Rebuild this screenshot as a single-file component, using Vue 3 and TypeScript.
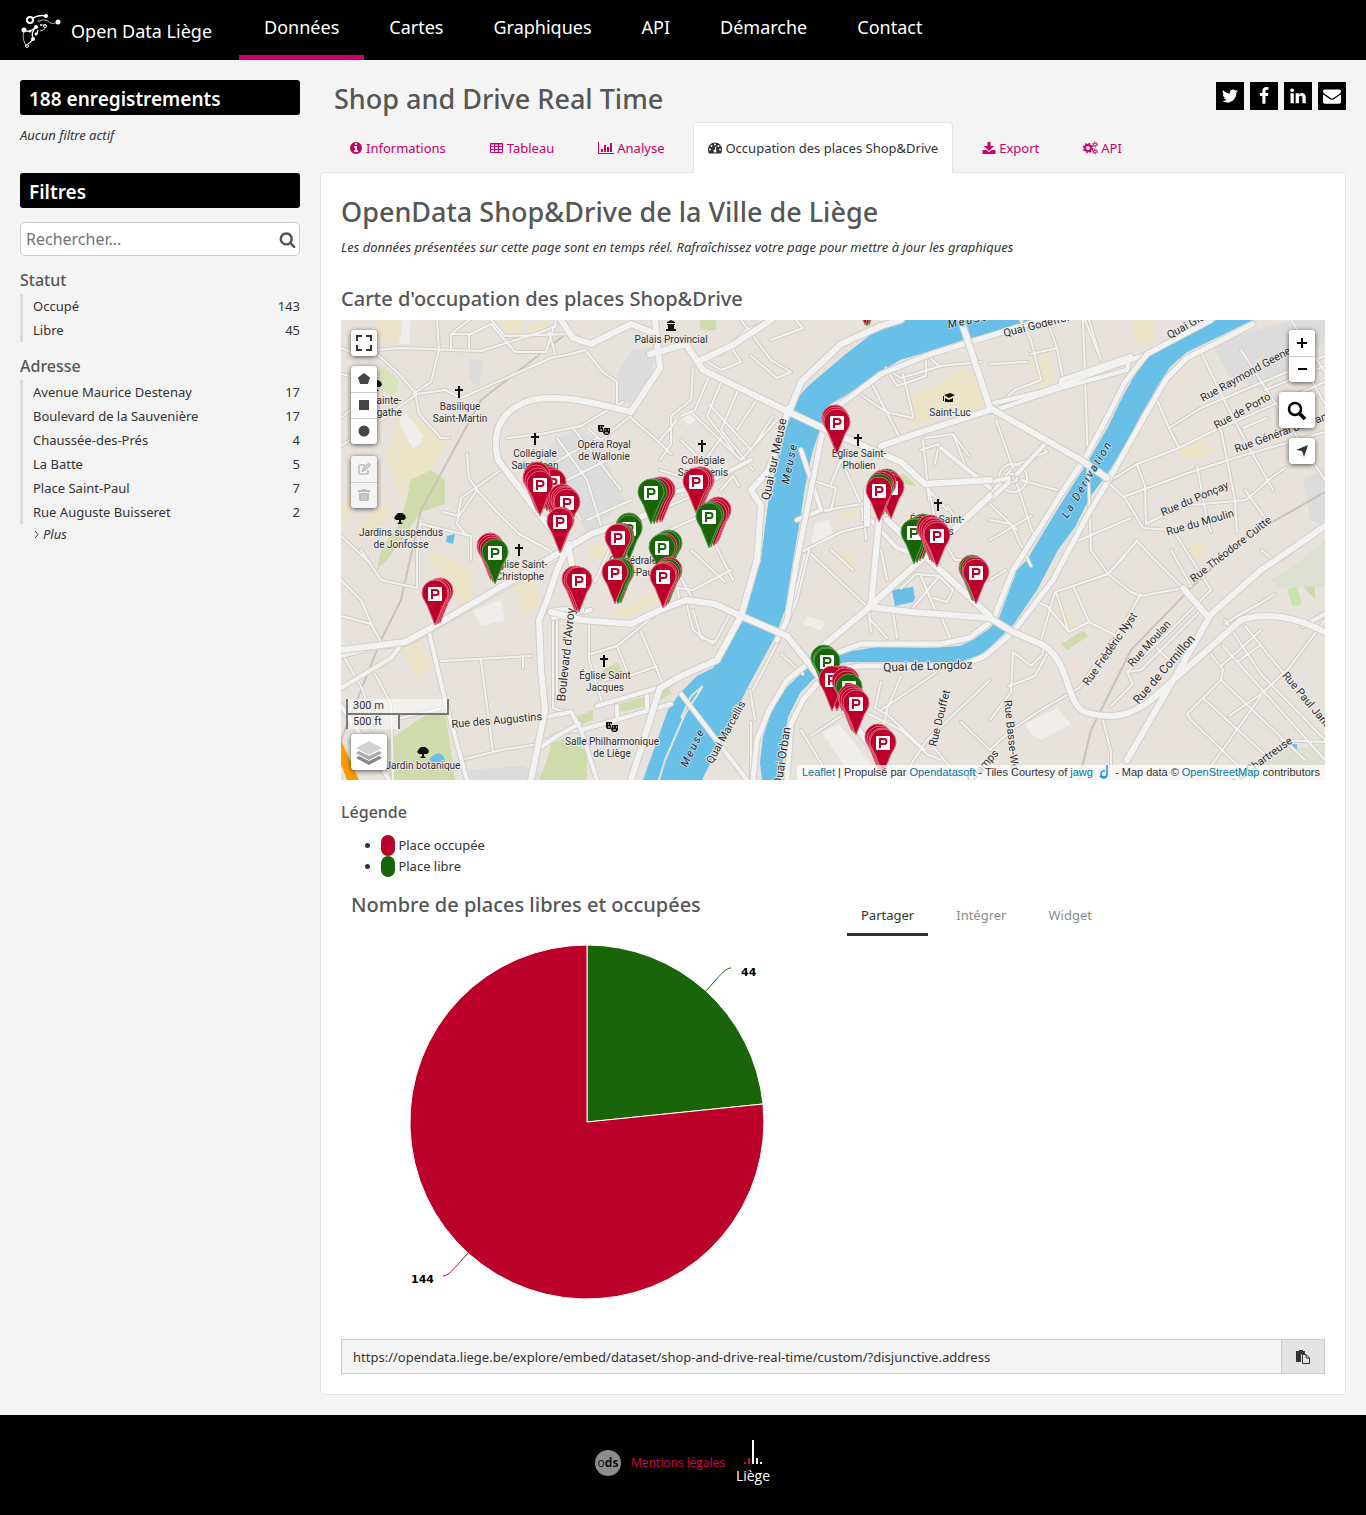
<script setup lang="ts">
import { ref } from 'vue'

interface Label { t: string[]; x: number; y: number; s?: number; r?: number }
interface Poi { kind: 'cross' | 'tree' | 'mask' | 'hall' | 'school'; x: number; y: number }
interface Stack { x: number; y: number; green?: boolean; ghosts: [number, number, number][] }

const nav = ['Données', 'Cartes', 'Graphiques', 'API', 'Démarche', 'Contact']
const tabs = [
  { id: 'info', label: 'Informations' },
  { id: 'table', label: 'Tableau' },
  { id: 'chart', label: 'Analyse' },
  { id: 'gauge', label: 'Occupation des places Shop&Drive' },
  { id: 'export', label: 'Export' },
  { id: 'api', label: 'API' },
]
const facets = [
  { name: 'Statut', items: [['Occupé', 143], ['Libre', 45]] },
  {
    name: 'Adresse',
    items: [
      ['Avenue Maurice Destenay', 17],
      ['Boulevard de la Sauvenière', 17],
      ['Chaussée-des-Prés', 4],
      ['La Batte', 5],
      ['Place Saint-Paul', 7],
      ['Rue Auguste Buisseret', 2],
    ],
  },
]
const shareTabs = ['Partager', 'Intégrer', 'Widget']
const query = ref('')
const embedUrl = ref('https://opendata.liege.be/explore/embed/dataset/shop-and-drive-real-time/custom/?disjunctive.address')

const social = [
  { name: 'Twitter', d: 'M1684 408q-67 98-162 167 1 14 1 42 0 130-38 259.5t-115.5 248.5-184.5 210.5-258 146-323 54.5q-271 0-496-145 35 4 78 4 225 0 401-138-105-2-188-64.5t-114-159.5q33 5 61 5 43 0 85-11-112-23-185.5-111.5t-73.5-205.5v-4q68 38 146 41-66-44-105-115t-39-154q0-88 44-163 121 149 294.5 238.5t371.5 99.5q-8-38-8-74 0-134 94.5-228.5t228.5-94.5q140 0 236 102 109-21 205-78-37 115-142 178 93-10 186-50z' },
  { name: 'Facebook', d: 'M1343 12v264h-157q-86 0-116 36t-30 108v189h293l-39 296h-254v759h-306v-759h-255v-296h255v-218q0-186 104-288.5t277-102.5q147 0 228 12z' },
  { name: 'LinkedIn', d: 'M477 625v991h-330v-991h330zm21-306q1 73-50.5 122t-135.5 49h-2q-82 0-132-49t-50-122q0-74 51.5-122.5t134.5-48.5 133 48.5 51 122.5zm1166 729v568h-329v-530q0-105-40.5-164.5t-126.5-59.5q-63 0-105.5 34.5t-63.5 85.5q-11 30-11 81v553h-329q2-399 2-647t-1-296l-1-48h329v144h-2q20-32 41-56t56.5-52 87-43.5 114.5-15.5q171 0 275 113.5t104 332.5z' },
  { name: 'E-mail', d: 'M1792 710v794q0 66-47 113t-113 47h-1472q-66 0-113-47t-47-113v-794q44 49 101 87 362 246 497 345 57 42 92.5 65.5t94.5 48 110 24.5h2q51 0 110-24.5t94.5-48 92.5-65.5q170-123 498-345 57-39 100-87zm0-294q0 79-49 151t-122 123q-376 261-468 325-10 7-42.5 31t-54 38.5-52 32.5-57.5 27-50 9h-2q-23 0-50-9t-57.5-27-52-32.5-54-38.5-42.5-31q-91-64-262-182.5t-205-142.5q-62-42-117-115.5t-55-136.5q0-78 41.5-130t118.5-52h1472q65 0 112.5 47t47.5 113z' },
]
const infoPath = 'M1152 1376v-160q0-14-9-23t-23-9h-96v-512q0-14-9-23t-23-9h-320q-14 0-23 9t-9 23v160q0 14 9 23t23 9h96v320h-96q-14 0-23 9t-9 23v160q0 14 9 23t23 9h448q14 0 23-9t9-23zm-128-896v-160q0-14-9-23t-23-9h-192q-14 0-23 9t-9 23v160q0 14 9 23t23 9h192q14 0 23-9t9-23zm640 416q0 209-103 385.5t-279.5 279.5-385.5 103-385.5-103-279.5-279.5-103-385.5 103-385.5 279.5-279.5 385.5-103 385.5 103 279.5 279.5 103 385.5z'
const searchPath = 'M1216 832q0-185-131.5-316.5t-316.5-131.5-316.5 131.5-131.5 316.5 131.5 316.5 316.5 131.5 316.5-131.5 131.5-316.5zm512 832q0 52-38 90t-90 38q-54 0-90-38l-343-342q-179 124-399 124-143 0-273.5-55.5t-225-150-150-225-55.5-273.5 55.5-273.5 150-225 225-150 273.5-55.5 273.5 55.5 225 150 150 225 55.5 273.5q0 220-124 399l343 343q37 37 37 90z'

const areas: { f: string; d: string }[] = [
  { f: '#ece4c8', d: 'M36 0H60L56 26L34 20ZM155 0H182L178 22L160 14ZM188 4L206 0L205 18L190 20ZM58 92L112 118L92 146L60 176L44 140L54 112ZM14 212L36 186L52 184L50 196L28 214L14 226ZM88 230L132 250L130 276L122 286L110 272L96 250L86 240ZM166 240L196 262L200 290L184 294L178 284ZM60 330L78 320L92 346L76 358ZM245 226L262 222L266 236L250 240ZM270 292L318 270L320 282L284 298ZM572 72L596 66L620 48L645 60L646 86L600 96L572 106L564 100L570 88ZM498 192L520 186L522 196L500 200ZM492 236L512 232L514 252L500 248ZM790 0H814L812 22L796 24ZM688 38L706 32L714 60L698 70ZM836 130L856 120L874 128L864 138L842 140ZM840 230L862 220L866 232L850 240ZM714 290L724 287L736 306L730 312ZM0 186L12 170L10 196L0 200ZM500 232L516 238L514 250L492 240Z' },
  { f: '#d9e3ba', d: 'M24 46L44 48L58 60L54 76L38 68L20 58Z' },
  { f: '#d0dbab', d: 'M359 0H375V10H359ZM70 160L90 150L104 160V184L80 192L46 240L36 250L40 230L56 208L64 186ZM48 420L92 390L104 392L114 460H48ZM210 424L228 416L246 432V460H198L206 440ZM236 396L252 390L252 400L238 406ZM278 384L306 376L306 386L280 392ZM314 370L328 366L330 374L318 380ZM262 350L276 342L282 352L258 362ZM720 324L742 311L747 316L726 330ZM555 158L562 153L576 166L560 164ZM974 230V280L962 266L958 252Z' },
  { f: '#dce0d0', d: 'M930 260L960 240L984 220V266L940 268ZM920 444L946 430L984 424V450L960 460H910Z' },
  { f: '#dcdcdc', d: 'M292 30L316 26L308 62L300 84L278 82L276 54ZM128 38L142 42L138 66L128 60ZM216 118L240 108L262 128L272 156L284 180L246 216L236 190L196 144ZM870 22L952 0H984V22L960 36L920 70L888 56ZM962 160L984 148V206L970 200ZM128 450L180 446L200 452L196 460H130Z' },
  { f: '#efeeec', d: 'M58 96L66 94L82 116L78 126L72 128L60 108ZM62 0H70L68 24H58ZM132 290L160 280L164 300L140 306ZM481 412L498 404L540 456L530 462L506 450ZM466 296L484 302L480 310L462 304ZM340 92L348 90L356 100L346 106ZM474 204L488 200L492 214L480 226L470 222ZM684 404L716 388L730 404L700 420L690 414Z' },
  { f: '#f2dfdb', d: 'M725 344L736 337L744 350L732 354Z' },
  { f: '#cbe2a9', d: 'M946 269L956 267L961 284L952 287Z' },
  { f: '#ff9800', d: 'M0 420L18 460H6L0 444Z' },
  { f: '#68bfe8', d: 'M106 216L114 214L112 224L105 222ZM551 270L572 267L574 278L572 282L554 286ZM88 440C94 430 104 432 104 442L98 446ZM950 424H956V429H950Z' },
]
const water = [
  'M649 0H559L532 13L506 33L486 50L466 67L457 78L450 92L442 113L436 143L428 177L424 207L420 240L416 250L403 293L399 302L386 330L372 348L356 356L339 373L327 390L302 460H361L379 423L409 363L434 317L444 290L452 240L459 200L464 167L471 133L477 115L482 103L497 85L519 67L539 52L559 40L586 32L619 21L649 13L692 0Z',
  'M876 0L862 5L836 17L819 27L806 38L792 58L781 78L767 107L746 143L721 182L702 213L686 240L676 250L658 298L649 308L632 320L619 326L586 328L536 327L499 333L480 340L466 348L446 367L432 387L422 417L419 443L421 460H442V423L447 397L459 373L476 355L490 346L506 342H552L619 342L639 335L649 327L672 305L696 270L717 230L734 207L749 177L764 157L782 130L799 97L816 67L829 47L846 32L912 0Z',
]
const minor = [
  'M0 28L18 36L34 30L60 28L140 31L200 12L215 6', 'M96 0L98 30L90 62L72 74', 'M34 32L58 54L74 72L78 94L100 118H108', 'M0 126L40 100L76 74L104 70L120 78L210 38L230 34L244 30L262 52L276 62V84',
  'M128 0L110 14H130L150 4L162 18L174 32H205L215 0', 'M110 14V28M128 14V28', 'M150 0L164 16L230 14M208 12L214 34', 'M0 54L24 60L16 84L0 98', 'M126 134L128 158L136 170L154 190L178 214L208 230L214 236', 'M160 150L120 178L116 204L126 216', 'M80 204L130 216V240', 'M136 170L118 196L102 192', 'M166 118L200 114L240 106L260 94L282 82', 'M216 118L246 160L262 212M200 136L240 200M232 108L280 170M226 160L270 138M246 200L290 180M210 145L256 118',
  'M246 108L260 120L292 94M290 98L320 124L330 134', 'M20 230L40 260L76 268M30 244L0 216M76 268V230L80 200', 'M0 296L30 304L40 322M0 260L20 280L34 312M0 332L22 370L32 410', 'M100 341L190 336', 'M34 354L50 384L52 460M52 400L102 388', 'M140 340L152 432M182 336V348', 'M120 440L160 430L198 424L216 414L240 410', 'M212 300V388L224 392M216 300V380', 'M248 302V340L262 386M250 334L276 326L320 290M276 326L288 356M288 356L262 360M300 312L322 364M288 356L316 346',
  'M360 38L380 34L405 10L430 0M360 38L380 50L400 42L392 30M400 0L430 40L450 52M430 20L462 8L455 0M410 36L436 58L450 52', 'M352 48L350 80L330 96V124L319 140M370 52L354 90L340 96M382 58L366 96L392 130M398 68L380 110L404 140M418 76L396 110M350 92L400 140L436 100M368 84L410 130L432 96M340 120L380 160M319 150L350 160L380 118',
  'M404 140L412 150M380 170L392 156L398 166', 'M490 86L530 62L560 120M530 62L545 92L572 98M519 74L545 92M562 54L572 96M545 48L556 66L585 56V34L598 46L640 42', 'M547 50L560 58L600 46', 'M470 160L495 168L490 190L462 194M500 140L520 184L522 198M500 140L490 164M462 194L520 184L536 176M460 232L500 212L524 206L525 220M520 200H532', 'M582 120L588 180M584 118L612 114L628 136M612 114L626 150L648 160M580 130L598 124L594 144', 'M586 168L606 190M588 168L596 210L614 240L640 240M606 186L616 200', 'M470 234L530 290M490 230L512 250M560 268L575 254L598 256L612 270L606 282L592 278M580 256L594 290M600 254L570 290M528 298L546 318M552 292L556 318M600 296L610 320M528 292L530 312', 'M440 334L462 354M450 320L482 352', 'M520 390L560 410L586 434L600 440M540 362L534 388L548 396L584 430M560 356L545 392M540 390L596 352M470 416L500 396M460 410L490 460M546 392L536 424',
  'M649 92L674 70L700 60L690 20L680 0M690 34L716 28L706 0M716 28L722 58M649 44L686 42M744 0L760 40L748 0M649 174L670 150M655 100L672 148M680 160L716 170M660 166L652 170M676 164L692 214M649 184L676 210M700 126L706 132L672 146', 'M816 80L828 108L838 128M828 108L860 88L984 36M838 128L796 144L764 164M838 128L870 112L984 62', 'M860 32L884 82L906 124L932 170M880 110L894 180L896 212M796 144L804 166L805 204M762 158L784 178L802 208M782 177L850 152L900 136L984 112M856 146L866 200L870 212M802 208L832 210L870 270M805 204L840 186L905 180L930 158L944 148M950 0L984 52M900 30L984 160M902 108L926 98M734 222L790 198M795 220L810 236L842 268M904 170L924 198', 'M649 400L670 372L672 332L690 346L702 334L700 320L714 272L767 254L795 222M668 366L694 356L708 330M742 0L750 230L767 254L790 272L800 276L842 268M800 274L784 302L738 368L700 390L670 410L649 430M715 272L728 312L748 302L732 266M748 302L776 316M696 282L706 286L728 312M767 254L784 236', 'M649 260L665 250M830 230L850 266M870 270L820 320L786 352L792 364L770 386M850 278L860 290M860 290L800 350L786 352M816 328L830 342M920 230L930 238M884 300L920 354L984 420M884 304L896 296L918 284L934 274M904 306L940 350L960 376M870 334L882 350L880 360L862 378L846 394L850 400L912 460M882 326L984 440M880 360L964 440M880 346L920 310M896 342L918 326M920 376L860 460M984 300L948 348L920 374L888 396M862 378L930 440M762 400L770 432V460M940 420L984 422M649 220L690 196M649 200L670 204L690 246',
  'M960 42L984 84M924 70L984 46M940 240L984 206', 'M319 190L356 174M319 120L336 100', 'M254 262L268 230M319 214L360 196L392 260M330 240L350 276M340 286L336 268L352 270L390 250M350 230L384 262M352 290L360 318L374 322L388 296M346 286L352 310L372 324', 'M410 402V460M409 370L414 400M468 230L456 280L440 316L412 370M464 234L448 300', 'M540 230L546 260M560 460L586 420L649 360M590 424L620 460M620 402L649 430',
  'M658 158a14 14 0 1 0 28 0a14 14 0 1 0 -28 0', 'M668 158a4 4 0 1 0 8 0a4 4 0 1 0 -8 0',
]
const rail = ['M0 420L40 320L60 280L80 190L140 80L230 10', 'M738 460L750 410L790 330L850 268L900 220L984 172']
const mid = [
  'M0 336L30 328L64 324L90 310L230 230', 'M0 368L50 338L58 328', 'M88 312L104 380L126 460', 'M212 298L250 290M212 290L240 288', 'M200 398L230 392L240 410L256 460M240 410L330 384', 'M196 430L216 416L238 404', 'M256 386L330 364M276 386V396M306 376V390', 'M0 386L30 430L48 460', 'M319 174L356 168L410 140',
  'M460 130L480 190L456 200', 'M536 172L560 166M522 184L534 176', 'M530 200L556 228L582 236', 'M649 84L700 72L784 42L806 34M649 92L720 68L786 50L788 40M720 66V60L790 36', 'M600 128L649 168M649 180L668 162M676 154L704 124M649 162L668 158', 'M842 268L868 296', 'M962 306L984 294', 'M406 460L340 374',
]
const major = [
  'M0 330L64 322L90 308L250 214L290 200L319 190', 'M157 140C150 110 160 90 190 80C220 74 250 82 290 92L319 48L314 0', 'M157 140L200 196L228 230L240 290', 'M228 224L216 250L206 280L198 300L200 350L204 390L190 460', 'M210 292L240 300L290 304L319 290L345 280L374 284L400 296', 'M220 0L232 18L250 24L290 4L310 12', 'M309 34L345 24L362 50L448 92', 'M360 40L390 26L430 0', 'M448 92L490 112L560 142L584 164L649 160', 'M448 92L460 62L500 24L540 6L560 0', 'M448 88L428 150L410 170L420 186L416 240L400 296L376 340L340 356L319 368L290 460', 'M540 126L580 112L649 90', 'M400 296L446 316L470 346L540 440L556 460', 'M526 170V204', 'M620 0L649 88L740 140L766 158', 'M538 200L530 286L482 326', 'M528 287L580 240L649 176', 'M546 200L584 236L649 296', 'M528 287L570 292L649 298L672 312', 'M672 312L700 324C730 340 724 384 744 392C770 400 790 396 810 380L900 300C930 290 960 300 984 312', 'M868 296L920 250L984 206', 'M786 440L868 298', 'M842 268L868 298',
]
const quays = [
  'M482 110L474 150L464 200L456 240L446 300L436 320', 'M482 338L520 324L600 324L628 318L652 300L672 250L700 206L720 174L744 138L768 94L784 62L806 34L870 0', 'M912 4L846 38L826 58L806 92L770 156L746 196L712 260L672 312L644 336L620 346H520L490 350', 'M482 332L446 360L428 390L416 420L412 460', 'M486 352L462 380L450 404L446 460', 'M500 84L540 54L590 34L649 16L700 0',
]

const labels: Label[] = [
  { t: ['Palais Provincial'], x: 330, y: 23 }, { t: ['Basilique', 'Saint-Martin'], x: 119, y: 90 }, { t: ['Opéra Royal', 'de Wallonie'], x: 263, y: 128 },
  { t: ['Collégiale', 'Saint-Jean'], x: 194, y: 137 }, { t: ['Jardins suspendus', 'de Jonfosse'], x: 60, y: 216 }, { t: ['Sainte-', 'Agathe'], x: 45, y: 84 },
  { t: ['Église Saint-', 'Christophe'], x: 179, y: 248 }, { t: ['Cathédrale', 'Saint-Paul'], x: 292, y: 244 }, { t: ['Collégiale', 'Saint-Denis'], x: 362, y: 144 },
  { t: ['Église Saint-', 'Pholien'], x: 518, y: 137 }, { t: ['Saint-Luc'], x: 609, y: 96 }, { t: ['Église Saint-', 'Nicolas'], x: 596, y: 203 },
  { t: ['Église Saint', 'Jacques'], x: 264, y: 359 }, { t: ['Salle Philharmonique', 'de Liège'], x: 271, y: 425 }, { t: ['Jardin botanique'], x: 82, y: 449 },
  { t: ['Rue des Augustins'], x: 156, y: 404, s: 11, r: -5 }, { t: ["Boulevard d'Avroy"], x: 229, y: 335, s: 12, r: -84 }, { t: ['Quai sur Meuse'], x: 437, y: 140, s: 12, r: -78 },
  { t: ['Quai Marcellis'], x: 388, y: 414, s: 11, r: -61 }, { t: ['Quai Orban'], x: 445, y: 437, s: 12, r: -81 }, { t: ['Quai de Longdoz'], x: 587, y: 350, s: 12, r: -2 },
  { t: ['Rue Douffet'], x: 602, y: 399, s: 11, r: -76 }, { t: ['Rue Basse-Wez'], x: 667, y: 418, s: 11, r: 84 }, { t: ['Quai Godefroid'], x: 699, y: 8, s: 11, r: -14 }, { t: ['Quai Gloesener'], x: 861, y: 1, s: 11, r: -29 },
  { t: ['Rue Raymond Geenen'], x: 909, y: 56, s: 11, r: -29 }, { t: ['Rue de Porto'], x: 903, y: 94, s: 11, r: -29 }, { t: ['Rue Général Bertrand'], x: 944, y: 115, s: 11, r: -20 }, { t: ['Rue du Ponçay'], x: 855, y: 182, s: 11, r: -23 },
  { t: ['Rue du Moulin'], x: 860, y: 206, s: 11, r: -16 }, { t: ['Rue Théodore Cuitte'], x: 892, y: 232, s: 11, r: -38 }, { t: ['Rue Frédéric Nyst'], x: 772, y: 331, s: 11, r: -55 }, { t: ['Rue Moulan'], x: 811, y: 326, s: 11, r: -48 },
  { t: ['Rue de Cornillon'], x: 826, y: 352, s: 12, r: -49 }, { t: ['Rue Paul Janson'], x: 967, y: 387, s: 11, r: 50 }, { t: ['Rue de la Chartreuse'], x: 911, y: 452, s: 11, r: -36 }, { t: ['Rue des Champs'], x: 630, y: 464, s: 11, r: -47 },
]
const riverLabels = [
  { t: 'Meuse', x: 452, y: 144, r: -78 }, { t: 'Meuse', x: 355, y: 429, r: -64 }, { t: 'La Dérivation', x: 749, y: 161, r: -59 }, { t: 'Meuse', x: 628, y: 4, r: -12 },
]
const pois: Poi[] = [
  { kind: 'hall', x: 330, y: 6 }, { kind: 'cross', x: 118, y: 72 }, { kind: 'cross', x: 194, y: 119 }, { kind: 'mask', x: 263, y: 110 }, { kind: 'tree', x: 59, y: 198 }, { kind: 'tree', x: 35, y: 65 },
  { kind: 'cross', x: 178, y: 230 }, { kind: 'cross', x: 361, y: 126 }, { kind: 'cross', x: 517, y: 120 }, { kind: 'school', x: 608, y: 78 }, { kind: 'cross', x: 597, y: 185 }, { kind: 'cross', x: 263, y: 341 }, { kind: 'mask', x: 271, y: 407 }, { kind: 'tree', x: 82, y: 432 },
]
// ghosts: dx, dy, colour (0 occupied, 1 free)
const pins: Stack[] = [
  { x: 524, y: 4, ghosts: [[4, 0, 0], [2, 1, 1]] },
  { x: 496, y: 133, ghosts: [[-2, -4, 0], [-1, -2, 0]] },
  { x: 212, y: 193, ghosts: [[-9, -5, 1], [-6, -3, 0], [-3, -2, 0]] },
  { x: 355, y: 192, ghosts: [[5, -1, 0], [4, -1, 0], [2, 0, 0]] },
  { x: 199, y: 195, ghosts: [[-3, -9, 0], [-4, -6, 0], [-2, -3, 0]] },
  { x: 550, y: 198, ghosts: [[-4, -5, 1], [-2, -3, 0]] },
  { x: 538, y: 201, ghosts: [[4, -7, 0], [2, -5, 0], [1, -3, 1]] },
  { x: 310, y: 203, green: true, ghosts: [[11, -2, 0], [9, -2, 0], [6, -1, 0], [3, 0, 1]] },
  { x: 226, y: 213, ghosts: [[-5, -5, 0], [-3, -3, 0], [-1, -2, 0]] },
  { x: 368, y: 227, green: true, ghosts: [[9, -6, 0], [7, -4, 0], [5, -2, 0], [2, -1, 1]] },
  { x: 219, y: 232, ghosts: [[1, -1, 0]] },
  { x: 288, y: 239, green: true, ghosts: [[0, -2, 1]] },
  { x: 573, y: 243, green: true, ghosts: [[9, -5, 1], [6, -3, 0], [3, -1, 1]] },
  { x: 596, y: 246, ghosts: [[-7, -7, 0], [-5, -5, 0], [-3, -4, 0], [-1, -2, 0]] },
  { x: 277, y: 248, ghosts: [[3, -1, 0], [2, 0, 1]] },
  { x: 321, y: 258, green: true, ghosts: [[7, -4, 1], [5, -3, 1], [2, -1, 0]] },
  { x: 154, y: 263, green: true, ghosts: [[-5, -6, 0], [-4, -4, 0], [-2, -2, 0]] },
  { x: 274, y: 283, ghosts: [[6, -1, 0], [5, -1, 1], [3, 0, 1]] },
  { x: 635, y: 283, ghosts: [[-4, -4, 0], [-3, -3, 1], [-1, -2, 0]] },
  { x: 322, y: 287, ghosts: [[6, -6, 0], [5, -4, 1], [3, -2, 0], [1, -1, 0]] },
  { x: 238, y: 291, ghosts: [[-4, -1, 0], [-2, 0, 0]] },
  { x: 94, y: 304, ghosts: [[5, -2, 0], [3, -1, 0], [1, 0, 0]] },
  { x: 486, y: 372, green: true, ghosts: [[-3, -3, 1], [-1, -1, 1]] },
  { x: 491, y: 390, ghosts: [[14, 1, 0], [10, 0, 0], [5, 0, 0]] },
  { x: 508, y: 398, green: true, ghosts: [[-4, -6, 0], [-2, -3, 0]] },
  { x: 515, y: 414, ghosts: [[-5, -6, 0], [-4, -4, 0], [-2, -2, 0]] },
  { x: 542, y: 453, ghosts: [[-5, -5, 0], [-3, -3, 0], [-1, -1, 0]] },
]
const pinShape = 'M0 1L-8 -19C-11 -24 -13 -27 -13 -31A13 13 0 0 1 13 -31C13 -27 11 -24 8 -19Z'
const roads = [
  { d: minor, w: 3 }, { d: mid, w: 5 }, { d: quays, w: 6 }, { d: major, w: 7 },
]
</script>

<template>
  <div class="page">
    <header class="topbar">
      <a class="brand" href="#">
        <svg width="41" height="36" viewBox="0 0 41 36" fill="none" stroke="#fff" aria-hidden="true">
          <path d="M12 6C16 3 21 2 26 3" stroke-width="1.500" />
          <path d="M20 8C23 6 27 7 29 9S34 11 37 9M22 12H26M4 17C2 24 4 31 7 33M20 18Q24 18 26 14" stroke-width=".7" />
          <path d="M4 17Q7 19 10 18T16 13M8 31L14 26C10 22 13 17 17 13M17 21L18 17" stroke-width="1.200" />
          <circle cx="10" cy="7" r="3" stroke-width="2" /><circle cx="25" cy="13" r="1.500" /><circle cx="7" cy="33" r="1.500" /><circle cx="19" cy="8" r="1" stroke-width=".5" />
          <g fill="#fff" stroke="none"><circle cx="26" cy="3" r="2" /><circle cx="38" cy="9" r="2.500" /><circle cx="4" cy="17" r="2.500" /><circle cx="16" cy="14" r="2" /><circle cx="10" cy="18" r="1.500" /><circle cx="13" cy="26" r="2" /><circle cx="16" cy="21" r="1.500" /><circle cx="21" cy="12" r="1" /></g>
        </svg>
        <span>Open Data Liège</span>
      </a>
      <nav>
        <a v-for="(n, i) in nav" :key="n" href="#" :class="{ on: i === 0 }">{{ n }}</a>
      </nav>
    </header>

    <div class="body">
      <aside>
        <h2 class="bar">188 enregistrements</h2>
        <p class="nofilter">Aucun filtre actif</p>
        <h2 class="bar">Filtres</h2>
        <form class="search" @submit.prevent>
          <input v-model="query" type="text" placeholder="Rechercher..." aria-label="Rechercher" />
          <button type="submit" aria-label="Lancer la recherche">
            <svg width="17" height="17" viewBox="0 0 1792 1792" fill="#565656"><path :d="searchPath" /></svg>
          </button>
        </form>
        <section v-for="f in facets" :key="f.name" class="facet">
          <h3>{{ f.name }}</h3>
          <ul>
            <li v-for="it in f.items" :key="it[0]"><a href="#"><span>{{ it[0] }}</span><span>{{ it[1] }}</span></a></li>
          </ul>
        </section>
        <a class="more" href="#"><svg width="6" height="9" viewBox="0 0 6 9" fill="none" stroke="#333"><path d="M1 1L4 4.500L1 8" /></svg>Plus</a>
      </aside>

      <main>
        <div class="title">
          <h1>Shop and Drive Real Time</h1>
          <div class="social">
            <a v-for="s in social" :key="s.name" href="#" :aria-label="s.name"><svg width="18" height="18" viewBox="0 0 1792 1792" fill="#fff"><path :d="s.d" /></svg></a>
          </div>
        </div>
        <nav class="tabs">
          <a v-for="t in tabs" :key="t.id" href="#" :class="{ on: t.id === 'gauge' }">
            <svg v-if="t.id === 'info'" width="14" height="14" viewBox="0 0 1792 1792" fill="currentColor"><path :d="infoPath" /></svg>
            <svg v-else-if="t.id === 'table'" width="14" height="14" viewBox="0 0 14 14" fill="none" stroke="currentColor"><path d="M.5 2.500h12v9h-12zM0 3h13M.5 5.500h12M.5 8.500h12M4.500 2v10M8.500 2v10" /></svg>
            <svg v-else-if="t.id === 'chart'" width="16" height="14" viewBox="0 0 16 14" fill="none" stroke="currentColor"><path d="M.5 1v11.500H16" /><path d="M4 11V8M7 11V4M10 11V6M13 11V2" stroke-width="2" /></svg>
            <svg v-else-if="t.id === 'gauge'" width="14" height="14" viewBox="0 0 14 14"><path d="M0 8.500A7 7 0 0 1 14 8.500Q14 10.700 13 12.500H1Q0 10.700 0 8.500Z" fill="currentColor" /><g fill="#fff"><circle cx="2" cy="8.500" r="1" /><circle cx="3.500" cy="5" r="1" /><circle cx="7" cy="3.500" r="1" /><circle cx="10.500" cy="5" r="1" /><circle cx="12" cy="8.500" r="1" /><circle cx="7" cy="10" r="1.500" /></g><path d="M7 10L8 5.500" stroke="#fff" /></svg>
            <svg v-else-if="t.id === 'export'" width="14" height="14" viewBox="0 0 14 14" fill="currentColor"><path d="M5.500 1h3v4H12L7 10 2 5h3.500z" /><path d="M.5 9H4.500L7 11.300 9.500 9h4v4H.5z" /></svg>
            <svg v-else width="15" height="14" viewBox="0 0 15 14" fill="none" stroke="currentColor"><circle cx="5" cy="7" r="3" stroke-width="2" /><circle cx="5" cy="7" r="4.500" stroke-width="1.500" stroke-dasharray="1.800 1.730" /><circle cx="12" cy="3.500" r="1.500" /><circle cx="12" cy="3.500" r="2.500" stroke-dasharray="1.300 1.300" /><circle cx="12" cy="10.500" r="1.500" /><circle cx="12" cy="10.500" r="2.500" stroke-dasharray="1.300 1.300" /></svg>
            <span>{{ t.label }}</span>
          </a>
        </nav>

        <div class="panel">
          <h2 class="big">OpenData Shop&amp;Drive de la Ville de Liège</h2>
          <p class="note">Les données présentées sur cette page sont en temps réel. Rafraîchissez votre page pour mettre à jour les graphiques</p>
          <h3 class="sub">Carte d'occupation des places Shop&amp;Drive</h3>

          <div class="map">
            <svg class="tiles" viewBox="0 0 984 460" preserveAspectRatio="xMidYMid slice" role="img" aria-label="Carte">
              <rect width="984" height="460" fill="#e7e2dc" />
              <path v-for="(a, i) in areas" :key="'a' + i" :d="a.d" :fill="a.f" />
              <path v-for="(d, i) in rail" :key="'r' + i" :d="d" fill="none" stroke="#c9c2bb" stroke-width="2" />
              <path v-for="(d, i) in water" :key="'w' + i" :d="d" fill="#68bfe8" />
              <path d="M362 366L344 394L324 440L318 460M362 366L350 376L340 398" fill="none" stroke="#e7e2dc" stroke-width="2" />
              <g fill="none" stroke-linejoin="round" stroke-linecap="round">
                <g v-for="(g, k) in roads" :key="'g' + k">
                  <path v-for="(d, i) in g.d" :key="'c' + i" :d="d" stroke="#d3cec8" :stroke-width="g.w + 1" />
                  <path v-for="(d, i) in g.d" :key="'f' + i" :d="d" stroke="#f2f2f2" :stroke-width="g.w - 1" />
                </g>
              </g>
              <g v-for="(p, i) in pois" :key="'p' + i" :transform="`translate(${p.x} ${p.y})`" fill="#111">
                <path v-if="p.kind === 'cross'" d="M-1 -6H1V-3H4V-1H1V6H-1V-1H-4V-3H-1Z" />
                <path v-else-if="p.kind === 'tree'" d="M-2 -5H2L5 -3L6 0L4 2H1V4L3 6H-3L-1 4V2H-4L-6 0L-4 -3Z" />
                <path v-else-if="p.kind === 'hall'" d="M-4 -4L0 -6L4 -4V-3H-4ZM-4 -2H4V-1H3V3H5V5H-5V3H-3V-1H-4Z" />
                <path v-else-if="p.kind === 'school'" d="M-5 -3L1 -5L6 -3L0 0ZM-4 0L0 2L4 0V4H-4ZM-5 -2V3H-6V-2Z" />
                <g v-else><path d="M-6 -5H0V-3H-1V2H-5L-6 0ZM0 -2H6V3L4 5H1L-1 3Z" /><path d="M-4 -3H-3M-2 -3H-1M1 0H2M4 0H5M1 3H4M-4 0H-2" stroke="#fff" /></g>
              </g>
              <g class="lbl">
                <text v-for="(l, i) in labels" :key="'l' + i" :font-size="l.s || 10" :transform="`translate(${l.x} ${l.y}) rotate(${l.r || 0})`">
                  <tspan v-for="(t, k) in l.t" :key="k" x="0" :dy="k * 12">{{ t }}</tspan>
                </text>
              </g>
              <g class="lbl river">
                <text v-for="(l, i) in riverLabels" :key="'v' + i" font-size="11" :transform="`translate(${l.x} ${l.y}) rotate(${l.r})`">{{ l.t }}</text>
              </g>
              <g v-for="(p, i) in pins" :key="'n' + i" :transform="`translate(${p.x} ${p.y})`">
                <path v-for="(g, k) in p.ghosts" :key="k" :d="pinShape" :transform="`translate(${g[0]} ${g[1]})`" :class="g[2] ? 'free' : 'busy'" />
                <path :d="pinShape" :class="p.green ? 'free' : 'busy'" />
                <rect x="-7" y="-37" width="14" height="14" rx="1" fill="#fff" />
                <path d="M-3 -25V-34H1A2 2 0 0 1 1 -29H-3" fill="none" :stroke="p.green ? '#1a640a' : '#bb0029'" stroke-width="2" />
              </g>
            </svg>

            <div class="ctl left">
              <div class="grp"><button aria-label="Plein écran"><svg width="16" height="16" viewBox="0 0 16 16" fill="none" stroke="#333" stroke-width="2"><path d="M1 6V1H6M10 1H15V6M15 10V15H10M6 15H1V10" /></svg></button></div>
              <div class="grp">
                <button aria-label="Polygone"><svg width="14" height="14" viewBox="0 0 14 14" fill="#464646"><path d="M7 1L13 5.500L11 12H3L1 5.500Z" /></svg></button>
                <button aria-label="Rectangle"><svg width="14" height="14" viewBox="0 0 14 14" fill="#464646"><path d="M2 1H12V11H2Z" /></svg></button>
                <button aria-label="Cercle"><svg width="14" height="14" viewBox="0 0 14 14" fill="#464646"><circle cx="7" cy="6" r="5.500" /></svg></button>
              </div>
              <div class="grp off">
                <button disabled aria-label="Modifier"><svg width="14" height="14" viewBox="0 0 14 14" fill="none" stroke="#bbb" stroke-width="1.500"><path d="M8 3H3Q2 3 2 4V11Q2 12 3 12H10Q11 12 11 11V8" /><path d="M5.500 9L6 7L11.500 1.500L13 3L7.500 8.500Z" /></svg></button>
                <button disabled aria-label="Supprimer"><svg width="14" height="14" viewBox="0 0 14 14" fill="#bbb"><path d="M5 0H9V1H13V3H1V1H5ZM2 4H12V11L11 12H3L2 11Z" /><path d="M5 5V11M7 5V11M9 5V11" stroke="#ddd" stroke-width=".8" /></svg></button>
              </div>
            </div>
            <div class="ctl right">
              <div class="grp">
                <button aria-label="Zoom avant"><svg width="12" height="12" viewBox="0 0 12 12"><path d="M6 1V11M1 6H11" stroke="#000" stroke-width="2" /></svg></button>
                <button aria-label="Zoom arrière"><svg width="12" height="12" viewBox="0 0 12 12"><path d="M2 5H11" stroke="#000" stroke-width="2" /></svg></button>
              </div>
              <div class="grp wide"><button aria-label="Chercher un lieu"><svg width="20" height="20" viewBox="0 0 20 20" fill="none" stroke="#000"><circle cx="8" cy="9" r="6" stroke-width="2.500" /><path d="M12 13L18 19" stroke-width="3.500" /></svg></button></div>
              <div class="grp"><button aria-label="Me localiser"><svg width="14" height="14" viewBox="0 0 14 14" fill="#333"><path d="M13 1L9 13L7 7L1 6Z" /></svg></button></div>
            </div>
            <div class="bottom">
              <div class="scale"><span class="m">300 m</span><span class="ft">500 ft</span></div>
              <div class="grp wide"><button aria-label="Fonds de carte"><svg width="28" height="28" viewBox="0 0 28 28"><path d="M1 20L14 27L27 20L24 18L14 23L4 18Z" fill="#888" /><path d="M1 15L14 22L27 15L24 13L14 18L4 13Z" fill="#aaa" /><path d="M1 10L14 3L27 10L14 17Z" fill="#d2d2d2" /></svg></button></div>
            </div>
            <div class="attr"><a href="#">Leaflet</a> | Propulsé par <a href="#">Opendatasoft</a> - Tiles Courtesy of <a href="#">jawg <svg width="12" height="14" viewBox="0 0 12 14" fill="none" stroke="#1a8fff" stroke-width="1.500"><path d="M9 0V9A3 3 0 0 1 3 9A3 3 0 0 1 7 6M2 11Q6 15 9 11" /></svg></a> - Map data © <a href="#">OpenStreetMap</a> contributors</div>
          </div>

          <h4>Légende</h4>
          <ul class="legend">
            <li><i class="sw red"></i> Place occupée</li>
            <li><i class="sw green"></i> Place libre</li>
          </ul>

          <div class="cols">
            <div class="chart">
              <h3>Nombre de places libres et occupées</h3>
              <svg class="pie" viewBox="0 0 472 400" role="img" aria-label="Nombre de places libres et occupées">
                <path d="M236 197V20A177 177 0 0 1 412 179Z" fill="#1a640a" stroke="#fff" />
                <path d="M236 197L412 179A177 177 0 1 1 236 20Z" fill="#bb0029" stroke="#fff" />
                <path d="M380 43C375 43 370 49 355 66" fill="none" stroke="#1a640a" />
                <path d="M92 351C97 351 102 345 117 328" fill="none" stroke="#bb0029" />
                <text x="390" y="51">44</text><text x="60" y="358">144</text>
              </svg>
            </div>
            <div class="share">
              <button v-for="(s, i) in shareTabs" :key="s" :class="{ on: i === 0 }">{{ s }}</button>
            </div>
          </div>

          <div class="url">
            <input v-model="embedUrl" type="text" readonly aria-label="Lien de partage" />
            <button aria-label="Copier"><svg width="14" height="14" viewBox="0 0 14 14"><path d="M0 1H3V0H7V1H9V4H6L5 5V12H0Z" fill="#333" /><path d="M6.500 4.500H10L13.500 8V13.500H6.500ZM10 4.500V8H13.500" fill="none" stroke="#333" /></svg></button>
          </div>
        </div>
      </main>
    </div>

    <footer>
      <svg width="26" height="26" viewBox="0 0 26 26" role="img" aria-label="ods"><circle cx="13" cy="13" r="13" fill="#8c8c8c" /><text x="13" y="17" text-anchor="middle" font-size="12" font-weight="700" fill="#111"><tspan font-weight="400">o</tspan>ds</text></svg>
      <a href="#">Mentions légales</a>
      <svg width="36" height="48" viewBox="0 0 36 48" role="img" aria-label="Liège"><path d="M18 1V25" stroke="#fff" stroke-width="2" /><path d="M22 19V25M26 23V25" stroke="#fff" stroke-width="2" /><path d="M14 19V25M10 23V25" stroke="#d8004f" stroke-width="2" /><text x="18" y="42" text-anchor="middle" font-size="14" fill="#fff">Liège</text></svg>
    </footer>
  </div>
</template>

<style>
body { background: #f4f4f4; }
</style>

<style scoped>
* { box-sizing: border-box; }
.page { font: 13px/20px "Noto Sans", "Open Sans", sans-serif; color: #333; background: #f4f4f4; }
h1, h2, h3, h4, p, ul { margin: 0; padding: 0; }
a { text-decoration: none; color: inherit; }
button { font: inherit; border: 0; padding: 0; cursor: pointer; color: inherit; }
svg { display: block; flex: none; }

.topbar { display: flex; height: 60px; background: #000; color: #fff; font-size: 18px; }
.brand { display: flex; align-items: center; gap: 10px; padding: 2px 27px 0 20px; white-space: nowrap; }
.topbar nav { display: flex; }
.topbar nav a { padding: 0 25px; line-height: 55px; border-bottom: 5px solid transparent; white-space: nowrap; }
.topbar nav a.on { border-color: #cd0067; }

.body { display: flex; gap: 20px; padding: 20px; align-items: flex-start; }
aside { width: 280px; flex: none; }
.bar { height: 35px; padding: 0 9px; border-radius: 3px; background: #000; color: #fff; font-size: 19px; line-height: 38px; font-weight: 600; }
.nofilter { font-style: italic; padding: 10px 0 28px; }
.search { display: flex; align-items: center; height: 34px; margin: 14px 0 12px; padding: 0 3px 0 5px; background: #fff; border: 1px solid #ccc; border-radius: 5px; }
.search input { flex: 1; min-width: 0; border: 0; padding: 0; outline: 0; background: none; font: inherit; font-size: 16px; }
.search input::placeholder { color: #757575; opacity: 1; }
.search button { background: none; }
.facet + .facet { margin-top: 12px; }
.facet h3 { font-size: 16px; line-height: 24px; padding-bottom: 2px; font-weight: 500; color: #565656; }
.facet ul { list-style: none; border-left: 3px solid #dcdcdc; padding-left: 10px; }
.facet li a { display: flex; justify-content: space-between; line-height: 24px; }
.more { display: flex; align-items: center; gap: 3px; margin-left: 14px; font-style: italic; }

main { flex: 1; min-width: 0; }
.title { display: flex; justify-content: space-between; height: 42px; padding-left: 14px; }
h1, .big { font-size: 27px; line-height: 38px; font-weight: 500; color: #565656; }
.social { display: flex; gap: 6px; padding-top: 2px; }
.social a { display: flex; width: 28px; height: 28px; background: #000; align-items: center; justify-content: center; }
.tabs { display: flex; gap: 14px; padding-left: 14px; position: relative; z-index: 1; margin-bottom: -1px; }
.tabs a { display: flex; align-items: center; gap: 3px; height: 51px; padding: 0 14px; border: 1px solid transparent; border-bottom: 0; color: #cd0067; white-space: nowrap; }
.tabs a.on { background: #fff; color: #333; border-color: #e4e4e4; border-radius: 4px 4px 0 0; }
.panel { background: #fff; border: 1px solid #e4e4e4; border-radius: 4px; padding: 20px; }
.note { font-style: italic; line-height: 32px; }
.sub { margin-top: 18px; font-size: 20px; line-height: 36px; font-weight: 500; color: #565656; }

.map { position: relative; height: 460px; margin-top: 3px; overflow: hidden; }
.tiles { width: 100%; height: 100%; }
.lbl { font-family: Roboto, sans-serif; fill: #2d2d32; text-anchor: middle; paint-order: stroke; stroke: #efece8; stroke-width: 2px; stroke-linejoin: round; }
.river { letter-spacing: 2px; stroke: #a8d8ee; font-style: italic; }
.busy { fill: #bb0029; stroke: #e0687e; }
.free { fill: #1a640a; stroke: #56a24b; }
.ctl { position: absolute; top: 10px; display: flex; flex-direction: column; gap: 10px; }
.ctl.left { left: 10px; }
.ctl.right { right: 10px; align-items: flex-end; }
.grp { width: 26px; border-radius: 4px; overflow: hidden; box-shadow: 0 1px 5px rgba(0, 0, 0, .65); background: #fff; }
.grp.off { margin-top: 2px; }
.grp button { display: flex; align-items: center; justify-content: center; width: 100%; height: 26px; background: #fff; }
.grp button + button { border-top: 1px solid #ccc; }
.grp.off button { background: #f4f4f4; }
.grp.wide { width: 36px; }
.wide button { height: 36px; }
.bottom { position: absolute; left: 5px; bottom: 10px; }
.scale { display: flex; flex-direction: column; align-items: flex-start; margin-bottom: 5px; font: 11px/14px Roboto, sans-serif; }
.scale span { padding-left: 5px; border: 2px solid #777; background: rgba(255, 255, 255, .5); }
.scale .m { width: 103px; border-top: 0; }
.scale .ft { width: 54px; border-top: 0; border-bottom: 0; }
.bottom .grp { margin-left: 5px; }
.attr { position: absolute; right: 0; bottom: 0; padding: 0 5px; background: rgba(255, 255, 255, .7); font: 11px/15px "Liberation Sans", Arial, sans-serif; white-space: nowrap; }
.attr a { color: #0078a8; }
.attr svg { display: inline-block; vertical-align: -3px; margin: 0 2px; }

h4 { margin-top: 20px; font-size: 16px; line-height: 24px; font-weight: 500; color: #565656; }
.legend { margin: 11px 0 8px; padding-left: 40px; line-height: 21px; }
.sw { display: inline-block; width: 14px; height: 21px; border-radius: 7px; vertical-align: top; }
.red { background: #bb0029; }
.green { background: #1a640a; }
.cols { display: flex; }
.chart, .share { width: 50%; }
.chart { padding: 0 10px; }
.chart h3 { font-size: 20px; line-height: 40px; font-weight: 500; color: #565656; }
.pie { width: 100%; height: 400px; }
.pie text { font: 700 11px "DejaVu Sans", sans-serif; fill: #000; }
.share { display: flex; align-items: flex-start; gap: 14px; padding: 12px 14px; }
.share button { padding: 0 14px; height: 39px; background: none; border-bottom: 3px solid transparent; color: #8c8c8c; }
.share button.on { color: #333; border-color: #333; }
.url { display: flex; height: 35px; margin-top: 14px; border: 1px solid #ccc; }
.url input { flex: 1; min-width: 0; border: 0; padding: 0 11px; background: #f4f4f4; font: inherit; color: inherit; }
.url button { display: flex; align-items: center; justify-content: center; width: 43px; background: #e4e4e4; border-left: 1px solid #ccc; }

footer { display: flex; height: 100px; background: #000; justify-content: center; align-items: center; gap: 10px; padding-bottom: 4px; }
footer a { color: #d8004f; font: 12px/20px "Open Sans", sans-serif; }
footer text { font-family: "Open Sans", sans-serif; }
</style>
